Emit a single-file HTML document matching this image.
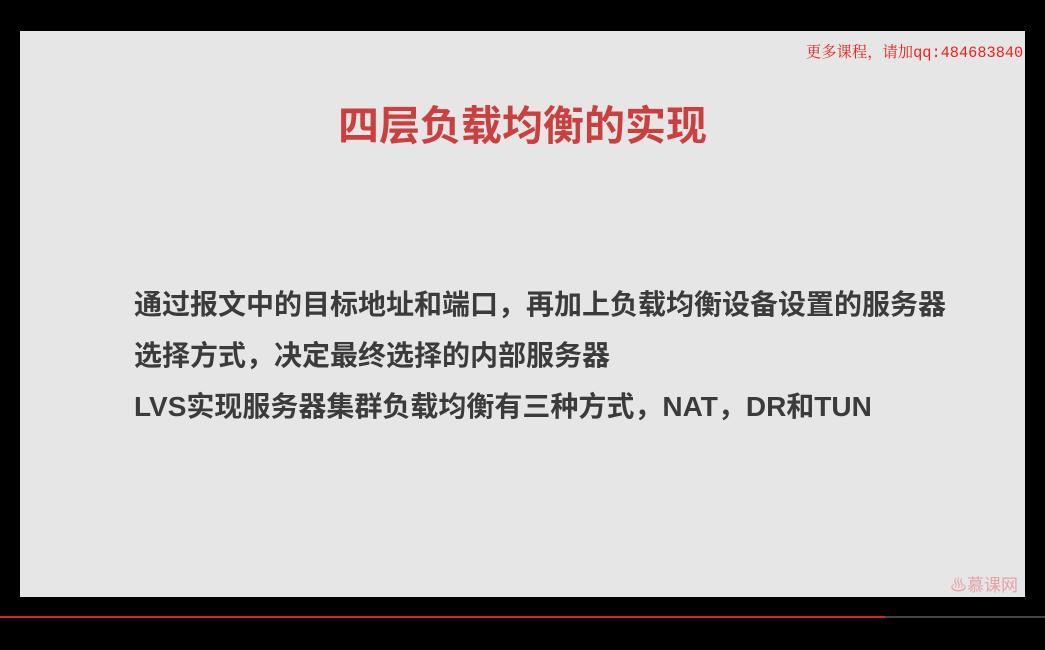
<!DOCTYPE html>
<html><head><meta charset="utf-8"><style>
body{margin:0;width:1045px;height:650px;background:#000;position:relative;overflow:hidden;font-family:"Liberation Sans","Noto Sans CJK SC",sans-serif}
.slide{position:absolute;left:20px;top:31px;width:1005px;height:566px;background:#e6e6e6}
.qq{position:absolute;left:806px;top:40px;color:#e8231c;font-size:15.3px;font-family:"Liberation Mono","Noto Serif CJK SC",serif;white-space:nowrap}
.title{position:absolute;left:0;width:1045px;top:92px;text-align:center;color:#c9403f;font-size:41px;font-weight:bold;letter-spacing:0}
.line{position:absolute;left:134px;color:#3b3b3b;font-size:28px;font-weight:bold;white-space:nowrap}
.logo{position:absolute;left:950px;top:571px;color:#e7a3a3;font-size:17px}
.bar{position:absolute;top:616px;left:0;width:885px;height:2px;background:#d9261c}
.bar2{position:absolute;top:616px;left:885px;width:160px;height:2px;background:#444}
</style></head><body>
<div class="slide"></div>
<div class="qq">更多课程，请加qq:484683840</div>
<div class="title">四层负载均衡的实现</div>
<div class="line" style="top:283px">通过报文中的目标地址和端口，再加上负载均衡设备设置的服务器</div>
<div class="line" style="top:334px">选择方式，决定最终选择的内部服务器</div>
<div class="line" style="top:385px">LVS实现服务器集群负载均衡有三种方式，NAT，DR和TUN</div>
<div class="logo">♨慕课网</div>
<div class="bar"></div><div class="bar2"></div>
</body></html>
